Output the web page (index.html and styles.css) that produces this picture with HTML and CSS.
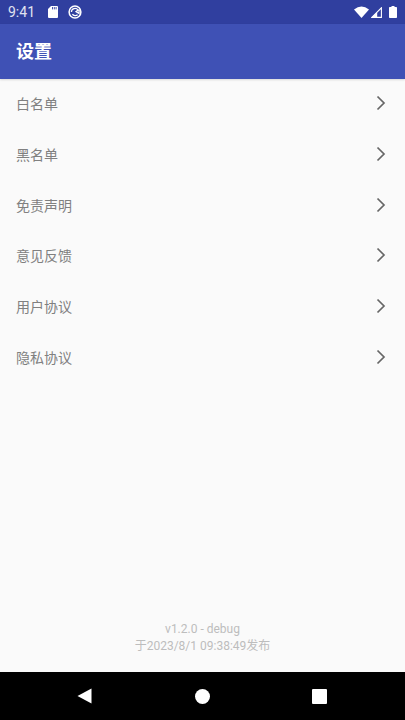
FILE: index.html
```html
<!DOCTYPE html>
<html lang="zh">
<head>
<meta charset="utf-8">
<title>设置</title>
<link rel="stylesheet" href="styles.css">
</head>
<body>
<div class="screen">
  <div class="status">
    <span class="time">9:41</span>
    <svg class="ic-sd" viewBox="0 0 10 12"><path d="M3 0H9Q10 0 10 1V11Q10 12 9 12H1Q0 12 0 11V3Z" fill="#fff"/><path d="M4.5 1V3.4M6.3 1V3.4M8.1 1V3.4" stroke="#3240a0" stroke-width="0.9"/></svg>
    <svg class="ic-sync" viewBox="0 0 14 14"><circle cx="7" cy="7" r="5.9" fill="none" stroke="#fff" stroke-width="1.5"/><path d="M3.4 7A3.6 3.6 0 0 1 10 5L8 6.6L11 8.4L11.2 4.4" fill="none" stroke="#fff" stroke-width="1.3"/><path d="M4.4 9.2A3.6 3.6 0 0 0 9.6 9.8" fill="none" stroke="#fff" stroke-width="1.3"/></svg>
    <span class="spacer"></span>
    <svg class="ic-wifi" viewBox="0 0 15 12"><path d="M0 3.6Q7.5 -2.4 15 3.6L7.5 12Z" fill="#fff"/></svg>
    <svg class="ic-signal" viewBox="0 0 11 11"><path d="M0.8 10.4L10.4 0.8V10.4Z" fill="none" stroke="#fff" stroke-width="1.1"/><path d="M0.8 10.4L6.2 5V10.4Z" fill="#fff"/></svg>
    <svg class="ic-battery" viewBox="0 0 8 12"><path d="M2.5 0H5.5V1H7.2Q8 1 8 1.8V11.2Q8 12 7.2 12H0.8Q0 12 0 11.2V1.8Q0 1 0.8 1H2.5Z" fill="#fff"/></svg>
  </div>
  <header class="toolbar"><span class="toolbar-title">设置</span></header>
  <main class="content">
    <ul class="menu">
      <li class="row"><span>白名单</span><svg class="chev" viewBox="0 0 10 16"><path d="M1.5 1.5L8 8L1.5 14.5"/></svg></li>
      <li class="row"><span>黑名单</span><svg class="chev" viewBox="0 0 10 16"><path d="M1.5 1.5L8 8L1.5 14.5"/></svg></li>
      <li class="row"><span>免责声明</span><svg class="chev" viewBox="0 0 10 16"><path d="M1.5 1.5L8 8L1.5 14.5"/></svg></li>
      <li class="row"><span>意见反馈</span><svg class="chev" viewBox="0 0 10 16"><path d="M1.5 1.5L8 8L1.5 14.5"/></svg></li>
      <li class="row"><span>用户协议</span><svg class="chev" viewBox="0 0 10 16"><path d="M1.5 1.5L8 8L1.5 14.5"/></svg></li>
      <li class="row"><span>隐私协议</span><svg class="chev" viewBox="0 0 10 16"><path d="M1.5 1.5L8 8L1.5 14.5"/></svg></li>
    </ul>
    <footer class="about">
      <p class="about-line">v1.2.0 - debug</p>
      <p class="about-line">于2023/8/1 09:38:49发布</p>
    </footer>
  </main>
  <nav class="navbar">
    <svg class="nav-back" viewBox="0 0 15 16"><path d="M0.5 8L14.5 0.5V15.5Z" fill="#fff"/></svg>
    <span class="nav-home"></span>
    <span class="nav-recent"></span>
  </nav>
</div>
</body>
</html>
```
FILE: styles.css
```css
* { box-sizing: border-box; }
html, body { margin: 0; padding: 0; }
body { font-family: Roboto, "Noto Sans CJK SC", sans-serif; background: #fafafa; }
.screen { width: 405px; height: 720px; display: flex; flex-direction: column; overflow: hidden; }
.status { height: 24px; flex: none; background: #303f9f; color: #fff; display: flex; align-items: center; padding: 0 8px; }
.time { font-size: 14px; width: 40px; opacity: .85; }
.ic-sd { width: 10px; height: 12px; margin-right: 10px; margin-top: -1px; }
.ic-sync { width: 14px; height: 14px; }
.spacer { flex: 1; }
.ic-wifi { width: 15px; height: 12px; margin-right: 2px; margin-top: -1px; }
.ic-signal { width: 11px; height: 11px; margin-right: 7px; }
.ic-battery { width: 8px; height: 12px; margin-top: -1px; }
.toolbar { height: 55px; flex: none; background: #3f51b5; color: #fff; display: flex; align-items: center; padding: 0 0 4px 16px; position: relative; box-shadow: 0 1px 2px rgba(0,0,0,.14); }
.toolbar-title { font-size: 18px; font-weight: 700; }
.content { flex: 1; display: flex; flex-direction: column; justify-content: space-between; background: #fafafa; }
.menu { list-style: none; margin: -1px 0 0; padding: 0; }
.row { height: 50.67px; display: flex; align-items: center; justify-content: space-between; padding: 0 19px 0 16px; font-size: 14px; color: #808080; }
.chev { width: 10px; height: 16px; fill: none; stroke: #666; stroke-width: 1.7; }
.about { text-align: center; font-size: 12px; color: #bdbdbd; padding-bottom: 17px; }
.about-line { margin: 0; height: 17px; line-height: 17px; }
.navbar { height: 48px; flex: none; background: #000; display: flex; align-items: center; }
.nav-back { width: 15px; height: 16px; margin-left: 77px; }
.nav-home { width: 15px; height: 15px; border-radius: 50%; background: #fff; margin-left: 103px; }
.nav-recent { width: 15px; height: 15px; border-radius: 1px; background: #fff; margin-left: 102px; }
```
